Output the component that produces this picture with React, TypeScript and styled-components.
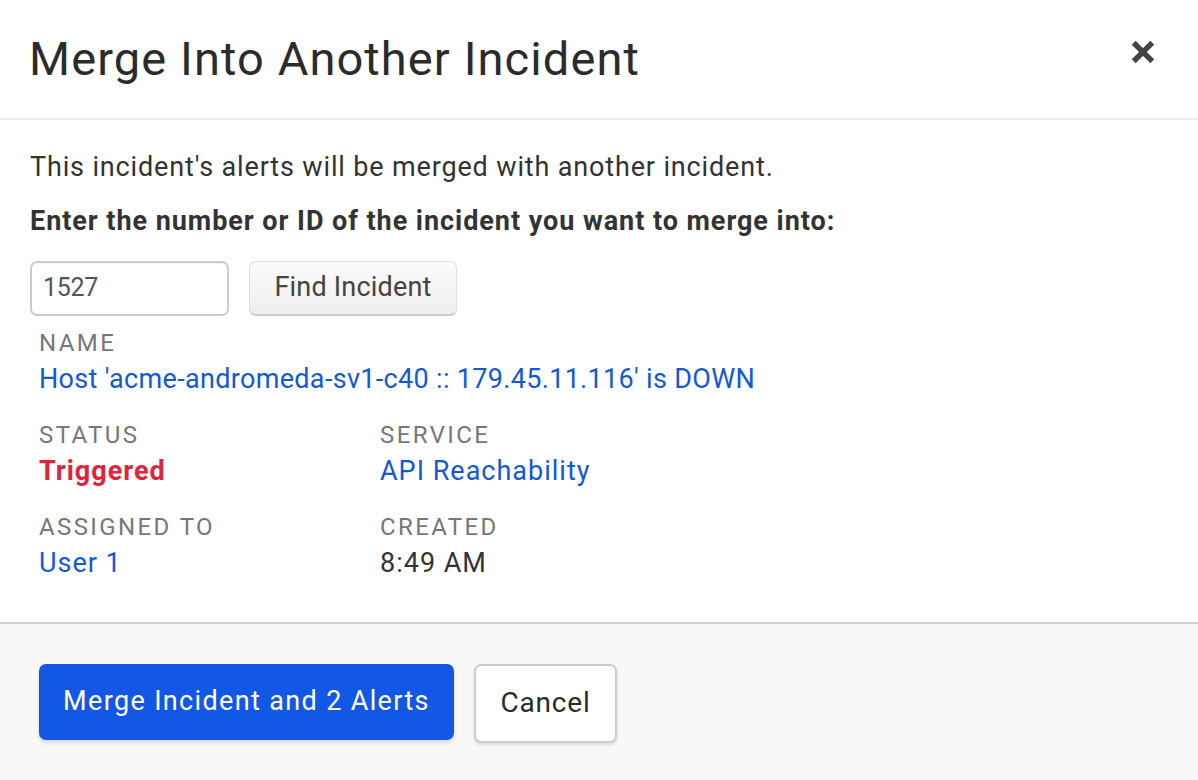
import React from 'react';
import styled, { createGlobalStyle } from 'styled-components';

const GlobalStyle = createGlobalStyle`
  html, body {
    margin: 0;
    padding: 0;
    background: #fff;
    font-family: Roboto, "Liberation Sans", sans-serif;
    color: #2b2b2b;
  }
`;

const Modal = styled.div`
  width: 1198px;
  height: 780px;
  display: flex;
  flex-direction: column;
  overflow: hidden;
`;

const Header = styled.header`
  height: 118px;
  padding: 0 42px 0 29px;
  display: flex;
  align-items: center;
  justify-content: space-between;
  border-bottom: 2px solid #ececec;
`;

const Title = styled.h1`
  margin: 0 0 2px;
  font-size: 47px;
  font-weight: 400;
  letter-spacing: 1.1px;
  color: #2b2b2b;
`;

const CloseButton = styled.button`
  width: 26px;
  height: 26px;
  margin-bottom: 14px;
  padding: 0;
  border: 0;
  background: none;
  display: flex;
  color: #444;
`;

const Body = styled.main`
  flex: 1;
  padding: 31px 30px 0;
`;

const Intro = styled.p`
  margin: 0;
  font-size: 27px;
  line-height: 32px;
  letter-spacing: 0.85px;
  color: #333;
`;

const Prompt = styled.p`
  margin: 22px 0 0;
  font-size: 27px;
  line-height: 32px;
  font-weight: 700;
  letter-spacing: 0.95px;
  color: #333;
`;

const FindRow = styled.div`
  margin-top: 24px;
  display: flex;
  gap: 20px;
`;

const NumberInput = styled.input`
  box-sizing: border-box;
  width: 199px;
  height: 55px;
  padding: 0 11px 2px;
  border: 2px solid #ccc;
  border-radius: 7px;
  box-shadow: inset 0 1px 1px rgba(0, 0, 0, 0.06);
  font: inherit;
  font-size: 25px;
  letter-spacing: -0.3px;
  color: #555;
  background: #fff;
`;

const FindButton = styled.button`
  box-sizing: border-box;
  width: 208px;
  height: 55px;
  padding: 0 0 2px;
  border: 1px solid #ddd;
  border-bottom: 2px solid #ccc;
  border-radius: 7px;
  background: linear-gradient(#fbfbfb, #eeeeee);
  font: inherit;
  font-size: 27px;
  letter-spacing: 0.2px;
  color: #444;
`;

const Details = styled.section`
  margin: 10px 0 0 9px;
  display: grid;
  grid-template-columns: 341px 1fr;
  row-gap: 20px;
`;

const Field = styled.div<{ $wide?: boolean }>`
  grid-column: ${props => (props.$wide ? '1 / -1' : 'auto')};
`;

const Label = styled.div`
  font-size: 24px;
  line-height: 34px;
  letter-spacing: 2.4px;
  color: #777;
`;

const Value = styled.div<{ $tone?: 'link' | 'danger'; $tight?: boolean }>`
  font-size: 27px;
  line-height: 38px;
  letter-spacing: ${props => (props.$tight ? '0.32px' : '1px')};
  font-weight: ${props => (props.$tone === 'danger' ? 700 : 400)};
  color: ${props =>
    props.$tone === 'link' ? '#1359d6' : props.$tone === 'danger' ? '#e0243a' : '#333'};
`;

const Footer = styled.footer`
  height: 158px;
  box-sizing: border-box;
  padding: 40px 39px 0;
  display: flex;
  align-items: flex-start;
  gap: 20px;
  border-top: 2px solid #cfcfcf;
  background: #f8f8f9;
`;

const PrimaryButton = styled.button`
  width: 415px;
  height: 76px;
  padding: 0 0 2px;
  border: 0;
  border-radius: 7px;
  background: #1257e6;
  box-shadow: 0 3px 4px rgba(0, 0, 0, 0.12);
  font: inherit;
  font-size: 27px;
  letter-spacing: 1.35px;
  color: #fff;
`;

const CancelButton = styled.button`
  box-sizing: border-box;
  width: 143px;
  height: 79px;
  padding: 0 0 2px;
  border: 2px solid #ccc;
  border-radius: 7px;
  background: #fff;
  box-shadow: 0 2px 3px rgba(0, 0, 0, 0.12);
  font: inherit;
  font-size: 28px;
  letter-spacing: 0.8px;
  color: #2b2b2b;
`;

const App: React.FC = () => (
  <Modal>
    <GlobalStyle />
    <Header>
      <Title>Merge Into Another Incident</Title>
      <CloseButton aria-label="Close">
        <svg viewBox="0 0 26 26" width="26" height="26">
          <path d="M5 5 L21 21 M21 5 L5 21" stroke="currentColor" strokeWidth="6" strokeLinecap="square" transform="translate(13 13) scale(.92) translate(-13 -13)" />
        </svg>
      </CloseButton>
    </Header>
    <Body>
      <Intro>This incident's alerts will be merged with another incident.</Intro>
      <Prompt>Enter the number or ID of the incident you want to merge into:</Prompt>
      <FindRow>
        <NumberInput defaultValue="1527" />
        <FindButton>Find Incident</FindButton>
      </FindRow>
      <Details>
        <Field $wide>
          <Label>NAME</Label>
          <Value $tone="link" $tight>Host 'acme-andromeda-sv1-c40 :: 179.45.11.116' is DOWN</Value>
        </Field>
        <Field>
          <Label>STATUS</Label>
          <Value $tone="danger">Triggered</Value>
        </Field>
        <Field>
          <Label>SERVICE</Label>
          <Value $tone="link">API Reachability</Value>
        </Field>
        <Field>
          <Label>ASSIGNED TO</Label>
          <Value $tone="link">User 1</Value>
        </Field>
        <Field>
          <Label>CREATED</Label>
          <Value>8:49 AM</Value>
        </Field>
      </Details>
    </Body>
    <Footer>
      <PrimaryButton>Merge Incident and 2 Alerts</PrimaryButton>
      <CancelButton>Cancel</CancelButton>
    </Footer>
  </Modal>
);

export default App;
